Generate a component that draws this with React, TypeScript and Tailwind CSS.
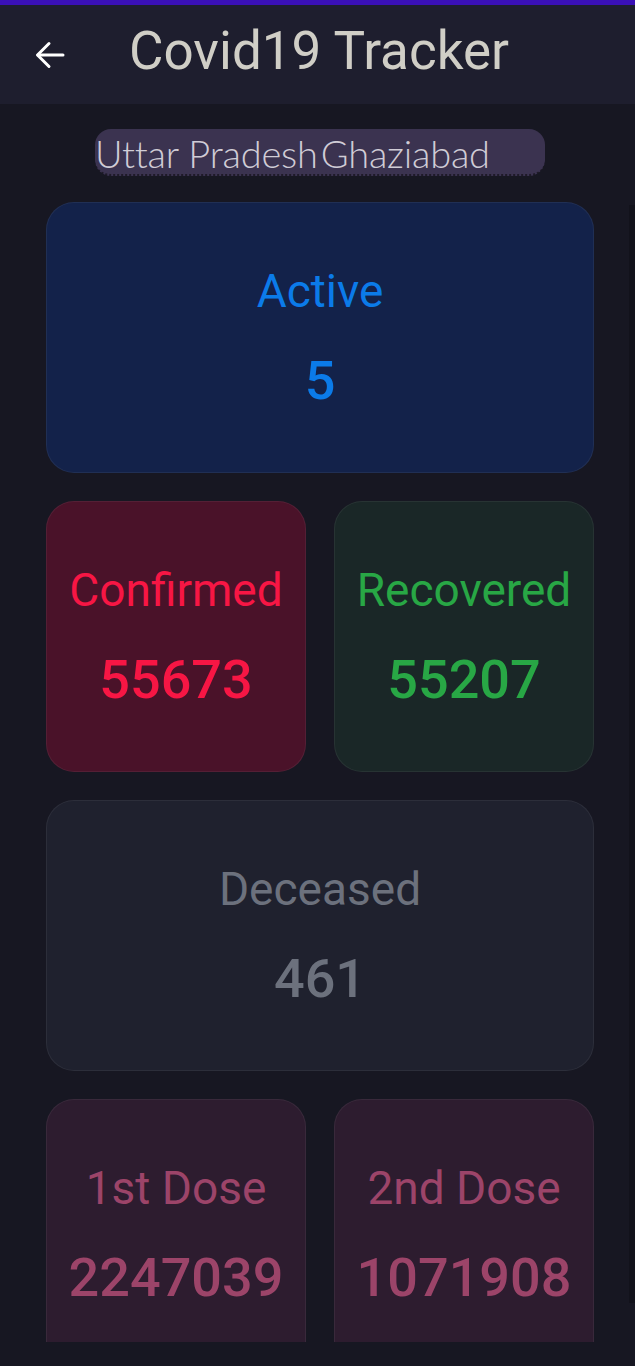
import React from 'react';

type Stat = {
  label: string;
  value: string;
  bg: string;
  text: string;
};

const FONT = { fontFamily: 'Roboto, "Noto Sans", sans-serif' };
const PILL_FONT = { fontFamily: 'Lato, Roboto, sans-serif' };

function StatCard({ stat }: { stat: Stat }) {
  return (
    <div
      className={`flex h-[271px] flex-1 flex-col items-center justify-center gap-[40px] rounded-[28px] border border-white/[0.06] ${stat.bg} ${stat.text}`}
    >
      <div className="text-[46px] leading-none font-normal">{stat.label}</div>
      <div className="text-[54px] leading-none font-medium">{stat.value}</div>
    </div>
  );
}

export default function App() {
  const active: Stat = { label: 'Active', value: '5', bg: 'bg-[#13224a]', text: 'text-[#0b7be9]' };
  const confirmed: Stat = { label: 'Confirmed', value: '55673', bg: 'bg-[#4a1229]', text: 'text-[#f71644]' };
  const recovered: Stat = { label: 'Recovered', value: '55207', bg: 'bg-[#1a2727]', text: 'text-[#28a745]' };
  const deceased: Stat = { label: 'Deceased', value: '461', bg: 'bg-[#1f212e]', text: 'text-[#6c717d]' };
  const dose1: Stat = { label: '1st Dose', value: '2247039', bg: 'bg-[#2d1c2f]', text: 'text-[#9c4469]' };
  const dose2: Stat = { label: '2nd Dose', value: '1071908', bg: 'bg-[#2d1c2f]', text: 'text-[#9c4469]' };

  return (
    <div className="min-h-[1366px] w-full bg-[#171722]" style={FONT}>
      <div className="h-[5px] bg-[#3a10b6]" />

      {/* app bar */}
      <header className="flex h-[99px] items-center bg-[#1e1e2e] pl-[35px]">
        <svg width="30" height="28" viewBox="0 0 30 28" fill="none" stroke="#ffffff" strokeWidth="3" strokeLinecap="round" strokeLinejoin="round">
          <path d="M28 14H3" />
          <path d="M14 2.5 2.5 14 14 25.5" />
        </svg>
        <h1 className="ml-[64px] -mt-[6px] text-[53px] leading-none font-normal text-[#d0cec6]">Covid19 Tracker</h1>
      </header>

      {/* location pill */}
      <div className="ml-[95px] mt-[25px] flex h-[47px] w-[450px] items-center rounded-[16px] border-b-2 border-dotted border-[#1e1a28] bg-[#3b3350] pt-[2px]">
        <span className="text-[38px] leading-none font-light tracking-[-0.2px] text-[#d0ccd6]" style={PILL_FONT}>
          Uttar Pradesh
        </span>
        <span className="ml-[3px] text-[38px] leading-none font-light tracking-[-0.2px] text-[#d0ccd6]" style={PILL_FONT}>
          Ghaziabad
        </span>
      </div>

      {/* scrolling card list */}
      <div className="mt-[14px] flex h-[1152px] overflow-hidden">
        <div className="flex flex-1 flex-col gap-[28px] pt-[12px] pl-[46px] pr-[35px]">
          <div className="flex">
            <StatCard stat={active} />
          </div>
          <div className="flex gap-[28px]">
            <StatCard stat={confirmed} />
            <StatCard stat={recovered} />
          </div>
          <div className="flex">
            <StatCard stat={deceased} />
          </div>
          <div className="flex gap-[28px]">
            <StatCard stat={dose1} />
            <StatCard stat={dose2} />
          </div>
        </div>
        <div className="mt-[15px] h-[1098px] w-[6px] bg-[#12121b]" />
      </div>
    </div>
  );
}
